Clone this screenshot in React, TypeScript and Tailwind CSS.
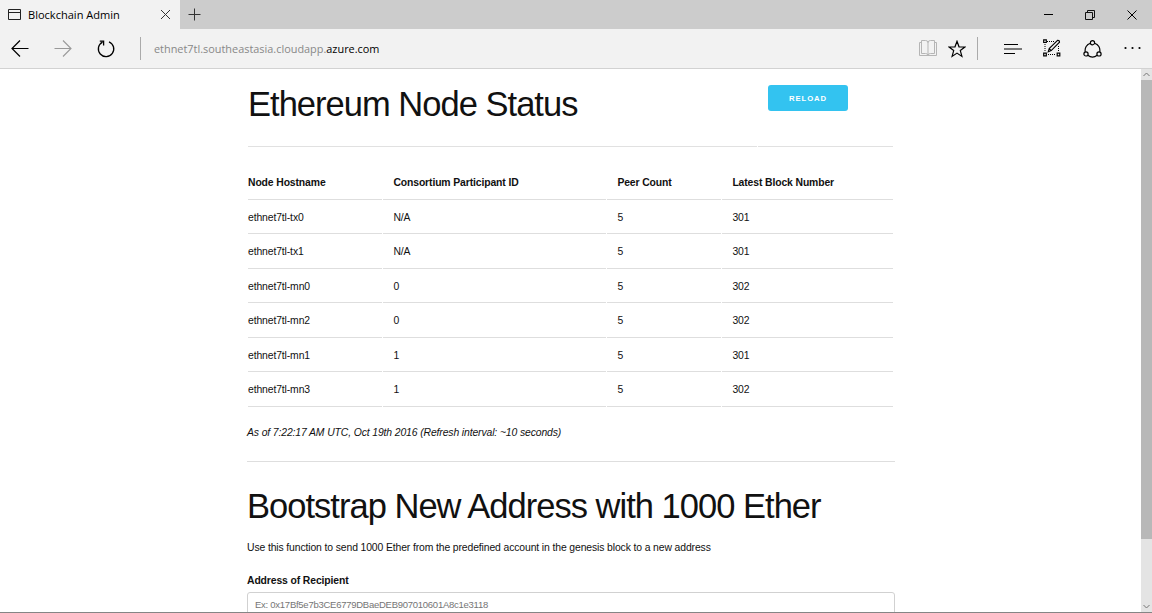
import type { ReactNode } from 'react';

const nodes = [
  { host: 'ethnet7tl-tx0', id: 'N/A', peers: 5, block: 301, height: 'h-[34px]' },
  { host: 'ethnet7tl-tx1', id: 'N/A', peers: 5, block: 301, height: 'h-[35px]' },
  { host: 'ethnet7tl-mn0', id: '0', peers: 5, block: 302, height: 'h-[34px]' },
  { host: 'ethnet7tl-mn2', id: '0', peers: 5, block: 302, height: 'h-[35px]' },
  { host: 'ethnet7tl-mn1', id: '1', peers: 5, block: 301, height: 'h-[34px]' },
  { host: 'ethnet7tl-mn3', id: '1', peers: 5, block: 302, height: 'h-[35px]' },
];

function Row({ cells, height, bold = false }: { cells: ReactNode[]; height: string; bold?: boolean }) {
  return (
    <div
      role="row"
      className={`grid grid-cols-[134px_223px_114px_171px] gap-px ${height} ${bold ? 'font-bold' : ''}`}
    >
      {cells.map((cell, i) => (
        <div
          key={i}
          role={bold ? 'columnheader' : 'cell'}
          className={`flex items-center border-b border-[#dedede] whitespace-nowrap ${bold ? 'pt-[2px]' : 'pt-[2px]'} ${i ? 'pl-[10.4px]' : ''}`}
        >
          {cell}
        </div>
      ))}
    </div>
  );
}

function TabBar() {
  return (
    <div className="flex h-[29px] shrink-0 bg-[#cccccc]">
      <div className="flex w-[180px] items-center bg-[#f2f2f2] pl-2">
        <svg width="13" height="11" viewBox="0 0 13 11" fill="none" stroke="#222">
          <path d="M.5.5h12v10H.5zM.5 3.5h12" />
        </svg>
        <span className="ml-[7px] w-[132px] pt-px text-[11.05px] text-black">Blockchain Admin</span>
        <svg width="11" height="11" viewBox="0 0 11 11" fill="none" stroke="#333">
          <path d="M1 1l9 9M10 1l-9 9" />
        </svg>
      </div>
      <div className="flex flex-1 items-center pl-2">
        <svg width="13" height="13" viewBox="0 0 13 13" fill="none" stroke="#333">
          <path d="M6.5.5v12M.5 6.5h12" />
        </svg>
      </div>
      <div className="flex items-center pr-[15px]">
        <svg className="mr-8" width="9" height="9" viewBox="0 0 9 9" stroke="#000">
          <path d="M0 4.5h9" />
        </svg>
        <svg className="mr-8" width="10" height="10" viewBox="0 0 10 10" fill="none" stroke="#111">
          <path d="M.5 2.5h7v7h-7zM2.5 2.5v-2h7v7h-2" />
        </svg>
        <svg width="10" height="10" viewBox="0 0 10 10" fill="none" stroke="#000">
          <path d="M.5.5l9 9M9.500.5l-9 9" />
        </svg>
      </div>
    </div>
  );
}

function AddressBar() {
  return (
    <div className="flex h-10 shrink-0 items-center border-b border-[#d2d2d2] bg-[#f2f2f2] pr-[11px] pl-[11px]">
      <svg width="18" height="17" viewBox="0 0 18 17" fill="none" stroke="#000" strokeWidth="1.2">
        <path d="M17.500 8.500H1M9 .5l-8 8 8 8" />
      </svg>
      <svg className="ml-[25px]" width="18" height="17" viewBox="0 0 18 17" fill="none" stroke="#999" strokeWidth="1.100">
        <path d="M.5 8.500H17M9 .5l8 8-8 8" />
      </svg>
      <svg className="ml-[25px]" width="19" height="18" viewBox="0 0 19 18" fill="none" stroke="#000" strokeWidth="1.300">
        <path d="M12 1.800A7.700 7.700 0 1 1 5.500 2.100M2.800 1.200h3.800v4.300" />
      </svg>
      <div className="ml-[24px] h-[23px] w-px bg-[#aaa]" />
      <span className="ml-[13px] flex-1 pt-[2px] text-[10.9px] text-[#888]">
        ethnet7tl.southeastasia.cloudapp.<span className="text-black">azure.com</span>
      </span>
      <svg width="18" height="17" viewBox="0 0 18 17" fill="none" stroke="#b5b5b5">
        <path d="M2.500.5h4Q9 .5 9 2.500 9 .5 11.500.5h4v13h-4Q9 13.500 9 15.500 9 13.500 6.500 13.500h-4zM9 2v13M2.500 2.500h-2v13h17v-13h-2" />
      </svg>
      <svg className="ml-[11px]" width="18" height="18" viewBox="0 0 18 18" fill="none" stroke="#000" strokeWidth="1.200">
        <path d="M9 1.300l2 5.500 5.900.2-4.600 3.600 1.600 5.800L9 13.100l-4.900 3.300 1.600-5.800L1.100 7l5.900-.2z" />
      </svg>
      <div className="ml-[11px] h-[23px] w-px bg-[#aaa]" />
      <svg className="ml-[25px]" width="19" height="12" viewBox="0 0 19 12" stroke="#000" strokeWidth="1.200">
        <path d="M1 1.500h14M1 6h18M1 10.500h11" />
      </svg>
      <svg className="mb-px ml-[21px]" width="18" height="18" viewBox="0 0 18 18" fill="none" stroke="#000">
        <path d="M4 2.500h7M2 5v8M15.500 7v6M5 15.500h8" strokeDasharray="1 1" />
        <path d="M.7.9h2.600v2.600H.7zM.7 14.200h2.600v2.600H.7zM14.200 14.200h2.600v2.600h-2.600z" strokeWidth="1.200" />
        <path d="M5.200 12.800l1-3.200 8.400-8.200q2-.2 1.900 1.800l-8.300 8.400zM6.200 9.600l2 2" strokeWidth="1.100" />
      </svg>
      <svg className="ml-[22px]" width="19" height="18" viewBox="0 0 19 18" fill="none" stroke="#000" strokeWidth="1.200">
        <circle cx="9.500" cy="2.700" r="2.100" />
        <circle cx="3" cy="13.900" r="2.100" />
        <circle cx="16" cy="13.900" r="2.100" />
        <path d="M7.400 3.200A7.400 7.400 0 0 0 2.300 11.900M11.600 3.200A7.400 7.400 0 0 1 16.700 11.900M4.800 15.300q4.700 3.600 9.400 0" />
      </svg>
      <svg className="mb-px ml-[22px]" width="17" height="4" viewBox="0 0 17 4" fill="#000">
        <circle cx="1.500" cy="2" r="1.100" />
        <circle cx="8.500" cy="2" r="1.100" />
        <circle cx="15.500" cy="2" r="1.100" />
      </svg>
    </div>
  );
}

function Scrollbar() {
  return (
    <div className="flex w-[11px] shrink-0 flex-col bg-[#e4e4e4]">
      <div className="flex h-[11px] items-center justify-center">
        <svg width="7" height="5" viewBox="0 0 7 5" fill="none" stroke="#777">
          <path d="M.5 4l3-3 3 3" />
        </svg>
      </div>
      <div className="h-[459px] bg-[#b8b8b8]" />
      <div className="mt-auto flex h-[11px] items-center justify-center">
        <svg width="7" height="5" viewBox="0 0 7 5" fill="none" stroke="#777">
          <path d="M.5 1l3 3 3-3" />
        </svg>
      </div>
    </div>
  );
}

export default function App() {
  return (
    <div className="flex h-[613px] w-[1152px] flex-col overflow-hidden border-b border-[#858585] bg-white font-['Segoe_UI','Open_Sans',sans-serif]">
      <TabBar />
      <AddressBar />
      <div className="flex min-h-0 flex-1">
        <main className="flex-1 overflow-hidden pl-[247px] font-['Liberation_Sans',Arial,sans-serif] text-[10.4px] tracking-[-0.12px] text-[#111]">
          <div className="w-[648px]">
            <div className="ml-px grid h-[78px] grid-cols-[509px_135px] gap-px">
              <div className="border-b border-[#e1e1e1] pt-[14px]">
                <h1 className="text-[34.5px] leading-[42px] tracking-[-0.98px] whitespace-nowrap">Ethereum Node Status</h1>
              </div>
              <div className="border-b border-[#e1e1e1] pt-4 pl-[10px]">
                <button className="h-[26px] w-20 rounded-[3px] bg-[#33c3f0] pt-px text-[7.7px] font-bold tracking-[0.9px] text-white">RELOAD</button>
              </div>
            </div>
            <div role="table" className="ml-px w-[645px] pt-[18px]">
              <Row bold height="h-[35px]" cells={['Node Hostname', 'Consortium Participant ID', 'Peer Count', 'Latest Block Number']} />
              {nodes.map((n) => (
                <Row key={n.host} height={n.height} cells={[n.host, n.id, n.peers, n.block]} />
              ))}
            </div>
            <p className="pt-[18px] leading-4 italic">As of 7:22:17 AM UTC, Oct 19th 2016 (Refresh interval: ~10 seconds)</p>
            <div className="mt-5 border-t border-[#dedede]" />
            <h1 className="pt-[23px] text-[34.5px] leading-[42px] tracking-[-0.98px] whitespace-nowrap">Bootstrap New Address with 1000 Ether</h1>
            <p className="pt-[13px] leading-4">Use this function to send 1000 Ether from the predefined account in the genesis block to a new address</p>
            <label htmlFor="recipient" className="mt-[17px] block leading-4 font-bold">Address of Recipient</label>
            <input
              id="recipient"
              className="mt-[3px] block h-[26px] w-full rounded-[3px] border border-[#d1d1d1] px-[7px] pb-[2px] text-[9.5px] tracking-[-0.26px] placeholder:text-[#757575]"
              placeholder="Ex: 0x17Bf5e7b3CE6779DBaeDEB907010601A8c1e3118"
            />
          </div>
        </main>
        <Scrollbar />
      </div>
    </div>
  );
}
